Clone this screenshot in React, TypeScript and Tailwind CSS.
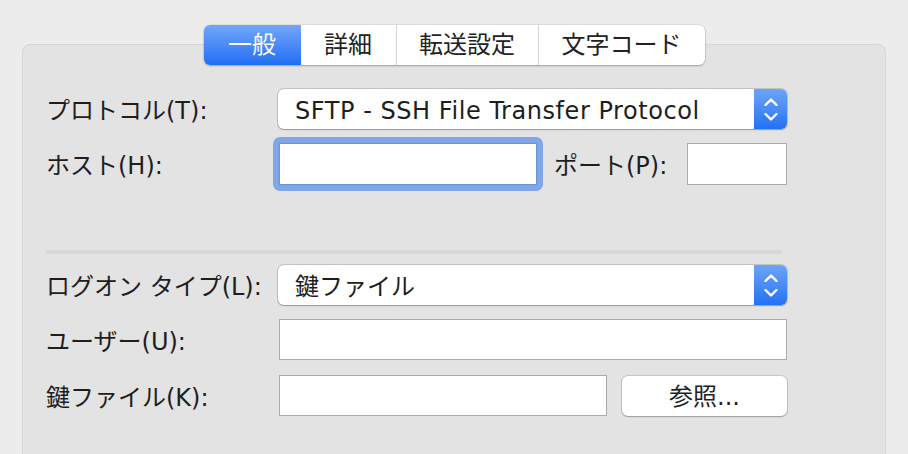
import React from "react";

const font = { fontFamily: '"DejaVu Sans", "Noto Sans CJK JP", sans-serif' };

function Stepper() {
  return (
    <div className="flex h-full w-[33px] flex-col items-center justify-center gap-[7px] rounded-r-[6px] bg-gradient-to-b from-[#6ea4f8] to-[#2170f5]">
      <svg width="14" height="8" viewBox="0 0 14 8">
        <path d="M1.5 7 L7 1.5 L12.5 7" fill="none" stroke="white" strokeWidth="2.4" strokeLinecap="round" strokeLinejoin="round" />
      </svg>
      <svg width="14" height="8" viewBox="0 0 14 8">
        <path d="M1.5 1 L7 6.5 L12.5 1" fill="none" stroke="white" strokeWidth="2.4" strokeLinecap="round" strokeLinejoin="round" />
      </svg>
    </div>
  );
}

function Select({ text, latin }: { text: string; latin?: boolean }) {
  return (
    <div className="flex h-[40px] w-[509px] items-stretch rounded-[6px] bg-white shadow-[0_0_0_1px_rgba(0,0,0,0.14),0_1px_1.5px_rgba(0,0,0,0.22)]">
      <div
        className={`flex flex-1 items-center pl-[17px] pt-[4px] text-[24px] leading-none text-[#1e1e1e] ${
          latin ? "tracking-[0.55px]" : ""
        }`}
      >
        {text}
      </div>
      <Stepper />
    </div>
  );
}

function Label({ children, w }: { children: React.ReactNode; w: string }) {
  return <div className={`${w} shrink-0 pt-[4px] text-[24px] leading-none text-[#1e1e1e]`}>{children}</div>;
}

export default function App() {
  const tabs = [
    { t: "一般", w: "w-[97px]", active: true },
    { t: "詳細", w: "w-[95px]", active: false },
    { t: "転送設定", w: "w-[142px]", active: false },
    { t: "文字コード", w: "w-[167px]", active: false },
  ];
  return (
    <div className="h-[454px] w-[908px] overflow-hidden bg-[#ececec]" style={font}>
      <div className="relative z-10 flex justify-center pt-[25px]">
        <div className="flex h-[40px] rounded-[6px] bg-white shadow-[0_0_0_0.5px_rgba(0,0,0,0.12),0_1px_2px_rgba(0,0,0,0.25)]">
          {tabs.map((tab, i) => (
            <div
              key={tab.t}
              className={`${tab.w} flex items-center justify-center text-[24px] ${
                tab.active
                  ? "rounded-l-[6px] bg-gradient-to-b from-[#72a6f8] to-[#1f6df5] text-white"
                  : "text-[#222]"
              } ${i > 1 ? "border-l border-[#d4d4d4]" : ""} ${i === 3 ? "rounded-r-[6px]" : ""}`}
            >
              {tab.t}
            </div>
          ))}
        </div>
      </div>
      <div className="mx-[22px] -mt-[21px] h-[440px] rounded-[8px] border border-[#d6d6d6] bg-[#e3e3e3] pl-[23px] pt-[44px]">
        <div className="flex h-[40px] items-center">
          <Label w="w-[232px]">プロトコル(T):</Label>
          <Select text="SFTP - SSH File Transfer Protocol" latin />
        </div>
        <div className="mt-[8px] flex h-[54px] items-center">
          <Label w="w-[227px]">ホスト(H):</Label>
          <div className="rounded-[7px] bg-[#80a8e8] p-[6px]">
            <div className="h-[42px] w-[258px] border border-[#6b93d6] bg-white" />
          </div>
          <div className="ml-[11px]">
            <Label w="w-[133px]">ポート(P):</Label>
          </div>
          <div className="h-[42px] w-[100px] border border-[#ababab] bg-white" />
        </div>
        <div className="mt-[59px] h-[4px] w-[736px] bg-[#d9d9d9]" />
        <div className="mt-[11px] flex h-[40px] items-center">
          <Label w="w-[232px]">ログオン タイプ(L):</Label>
          <Select text="鍵ファイル" />
        </div>
        <div className="mt-[14px] flex h-[41px] items-center">
          <Label w="w-[233px]">ユーザー(U):</Label>
          <div className="h-[41px] w-[508px] border border-[#ababab] bg-white" />
        </div>
        <div className="mt-[15px] flex h-[41px] items-center">
          <Label w="w-[233px]">鍵ファイル(K):</Label>
          <div className="h-[41px] w-[328px] border border-[#ababab] bg-white" />
          <div className="ml-[15px] flex h-[40px] w-[165px] items-center justify-center rounded-[6px] bg-white pt-[3px] text-[24px] leading-none text-[#222] shadow-[0_0_0_1px_rgba(0,0,0,0.12),0_1px_1.5px_rgba(0,0,0,0.22)]">
            参照...
          </div>
        </div>
      </div>
    </div>
  );
}
